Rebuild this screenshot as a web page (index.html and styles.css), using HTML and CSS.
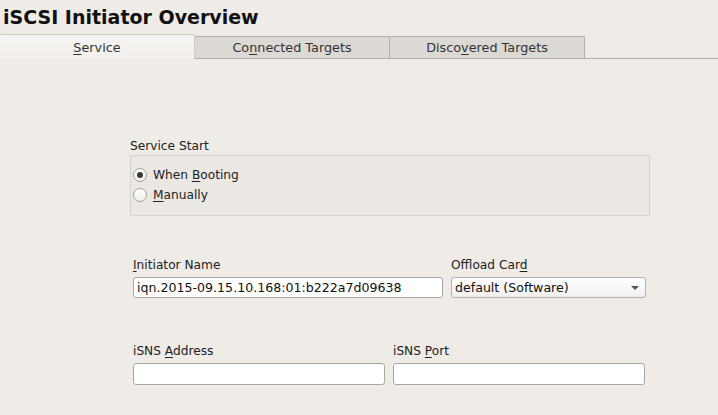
FILE: index.html
```html
<!DOCTYPE html>
<html lang="en">
<head>
    <meta charset="UTF-8">
    <title>iSCSI Initiator Overview</title>
    <link rel="stylesheet" href="styles.css">
</head>
<body>
    <h1 class="title">iSCSI Initiator Overview</h1>

    <!-- Вкладки -->
    <div class="tabs">
        <div class="tab active"><u>S</u>ervice</div>
        <div class="tab">Co<u>n</u>nected Targets</div>
        <div class="tab">Disco<u>v</u>ered Targets</div>
    </div>

    <div class="content">
        <div class="start-label">Service Start</div>
        <div class="group">
            <label class="radio-row"><span class="radio checked"></span><span>When <u>B</u>ooting</span></label>
            <label class="radio-row"><span class="radio"></span><span><u>M</u>anually</span></label>
        </div>

        <div class="field-row initiator">
            <div class="field">
                <div class="field-label"><u>I</u>nitiator Name</div>
                <div class="input name-input">iqn.2015-09.15.10.168:01:b222a7d09638</div>
            </div>
            <div class="field">
                <div class="field-label">Offload Car<u>d</u></div>
                <div class="input combo">default (Software)<span class="arrow"></span></div>
            </div>
        </div>

        <div class="field-row isns">
            <div class="field">
                <div class="field-label">iSNS <u>A</u>ddress</div>
                <div class="input isns-input"></div>
            </div>
            <div class="field">
                <div class="field-label">iSNS <u>P</u>ort</div>
                <div class="input isns-input"></div>
            </div>
        </div>
    </div>
</body>
</html>
```

FILE: styles.css
```css
/* Общие стили */
body {
    font-family: 'DejaVu Sans', sans-serif;
    font-size: 12.2px;
    background-color: #efebe7;
    color: #222;
    margin: 0;
    padding: 0;
}

u {
    text-decoration-thickness: 1px;
    text-underline-offset: 2px;
}

.title {
    margin: 0;
    padding: 4px 3px 0;
    height: 30px;
    font-size: 19px;
    line-height: 26px;
    font-weight: bold;
    color: #111;
}

/* Вкладки */
.tabs {
    display: flex;
    align-items: flex-end;
    height: 24px;
    border-bottom: 1px solid #b2afab;
}

.tab {
    box-sizing: border-box;
    width: 196px;
    height: 22px;
    line-height: 22px;
    font-size: 12.8px;
    text-align: center;
    background-color: #dcd9d5;
    border: 1px solid #b2afab;
    border-bottom: none;
    border-radius: 2px 2px 0 0;
    margin-right: -1px;
    color: #333;
}

.tab.active {
    width: 195px;
    height: 25px;
    margin-bottom: -1px;
    line-height: 25px;
    background: linear-gradient(#f7f5f3, #f2efec);
    border-left: none;
    border-color: #cfccc8;
    position: relative;
    z-index: 1;
}

/* Содержимое */
.content {
    padding-left: 130px;
    padding-top: 80px;
}

.start-label {
    line-height: 15px;
    margin-bottom: 1px;
}

.group {
    box-sizing: border-box;
    width: 520px;
    height: 61px;
    padding: 9px 0 0 2px;
    background-color: #ebe8e4;
    border: 1px solid #d6d3cf;
}

.radio-row {
    display: flex;
    align-items: center;
    height: 20px;
    gap: 6px;
}

.radio {
    box-sizing: border-box;
    width: 14px;
    height: 14px;
    border-radius: 50%;
    border: 1px solid #a3a09c;
    background: linear-gradient(#ffffff, #f1efec);
    display: flex;
    align-items: center;
    justify-content: center;
}

.radio.checked::after {
    content: "";
    width: 6px;
    height: 6px;
    border-radius: 50%;
    background-color: #3a3a3a;
}

.field-row {
    display: flex;
    gap: 8px;
    padding-left: 3px;
}

.initiator {
    margin-top: 42px;
}

.isns {
    margin-top: 46px;
}

.field-label {
    line-height: 15px;
    margin-bottom: 4px;
}

.input {
    box-sizing: border-box;
    height: 21px;
    line-height: 19px;
    padding-left: 3px;
    font-size: 12.6px;
    background-color: #fff;
    border: 1px solid #aaa6a1;
    border-radius: 3px;
    color: #111;
}

.name-input {
    width: 310px;
}

.combo {
    width: 195px;
    position: relative;
    background: linear-gradient(#ffffff, #f2f0ed);
    border-color: #b5b1ac;
}

.arrow {
    position: absolute;
    right: 6px;
    top: 8px;
    width: 0;
    height: 0;
    border-left: 4px solid transparent;
    border-right: 4px solid transparent;
    border-top: 4px solid #555;
}

.isns-input {
    width: 252px;
    height: 22px;
}
```
